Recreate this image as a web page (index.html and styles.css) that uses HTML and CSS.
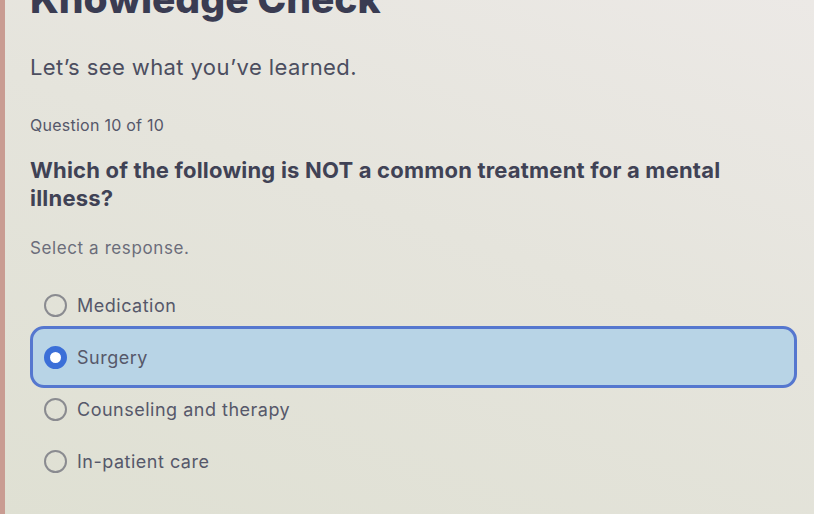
FILE: index.html
```html
<!DOCTYPE html>
<html lang="en">
  <head>
    <meta charset="UTF-8" />
    <meta name="viewport" content="width=device-width, initial-scale=1.0" />
    <title>Knowledge Check</title>
    <link rel="stylesheet" href="styles.css">
  </head>
  <body>
    <div class="quiz">
      <h1 class="quiz-title">Knowledge Check</h1>
      <p class="quiz-intro">Let’s see what you’ve learned.</p>
      <p class="quiz-count">Question 10 of 10</p>
      <h2 class="quiz-question">Which of the following is NOT a common treatment for a mental illness?</h2>
      <p class="quiz-hint">Select a response.</p>

      <div class="options">
        <label class="option">
          <span class="radio"></span>
          <span class="option-text">Medication</span>
        </label>
        <label class="option selected">
          <span class="radio"></span>
          <span class="option-text">Surgery</span>
        </label>
        <label class="option">
          <span class="radio"></span>
          <span class="option-text">Counseling and therapy</span>
        </label>
        <label class="option">
          <span class="radio"></span>
          <span class="option-text">In-patient care</span>
        </label>
      </div>
    </div>
  </body>
</html>
```

FILE: styles.css
```css
* {
  box-sizing: border-box;
}

html,
body {
  height: 100%;
}

body {
  margin: 0;
  overflow: hidden;
  font-family: "Inter", "DejaVu Sans", sans-serif;
  color: #45475a;
  background: linear-gradient(200deg, #ece9e6 0%, #e5e4dc 45%, #dfe0d3 100%);
  border-left: 5px solid #c99c92;
}

.quiz {
  padding: 0 17px 0 25px;
}

.quiz-title {
  margin: -24px 0 0;
  font-size: 39px;
  font-weight: 800;
  color: #3a3c52;
  line-height: 46px;
}

.quiz-intro {
  margin: 32px 0 0;
  font-size: 22px;
  letter-spacing: 0.4px;
  color: #4c4e60;
}

.quiz-count {
  margin: 35px 0 0;
  font-size: 16px;
  letter-spacing: 0.25px;
  color: #55576a;
}

.quiz-question {
  max-width: 720px;
  margin: 21px 0 0;
  font-size: 22px;
  font-weight: 700;
  letter-spacing: 0.2px;
  line-height: 28px;
  color: #404255;
}

.quiz-hint {
  margin: 26px 0 0;
  font-size: 17px;
  letter-spacing: 0.6px;
  color: #6b6d7a;
}

.options {
  margin-top: 28px;
  display: flex;
  flex-direction: column;
  gap: 14px;
}

.option {
  display: flex;
  align-items: center;
  gap: 10px;
  height: 38px;
  padding-left: 11px;
  font-size: 18px;
  letter-spacing: 0.5px;
  color: #56586a;
  border: 3px solid transparent;
  border-radius: 14px;
}

.option.selected {
  height: 62px;
  margin: -12px 0;
  background: #b8d4e6;
  border-color: #5577cf;
}

.radio {
  flex: none;
  width: 23px;
  height: 23px;
  border-radius: 50%;
  border: 2px solid #8a8b90;
}

.selected .radio {
  border: 6px solid #3b6fd8;
  background: #ffffff;
}
```
